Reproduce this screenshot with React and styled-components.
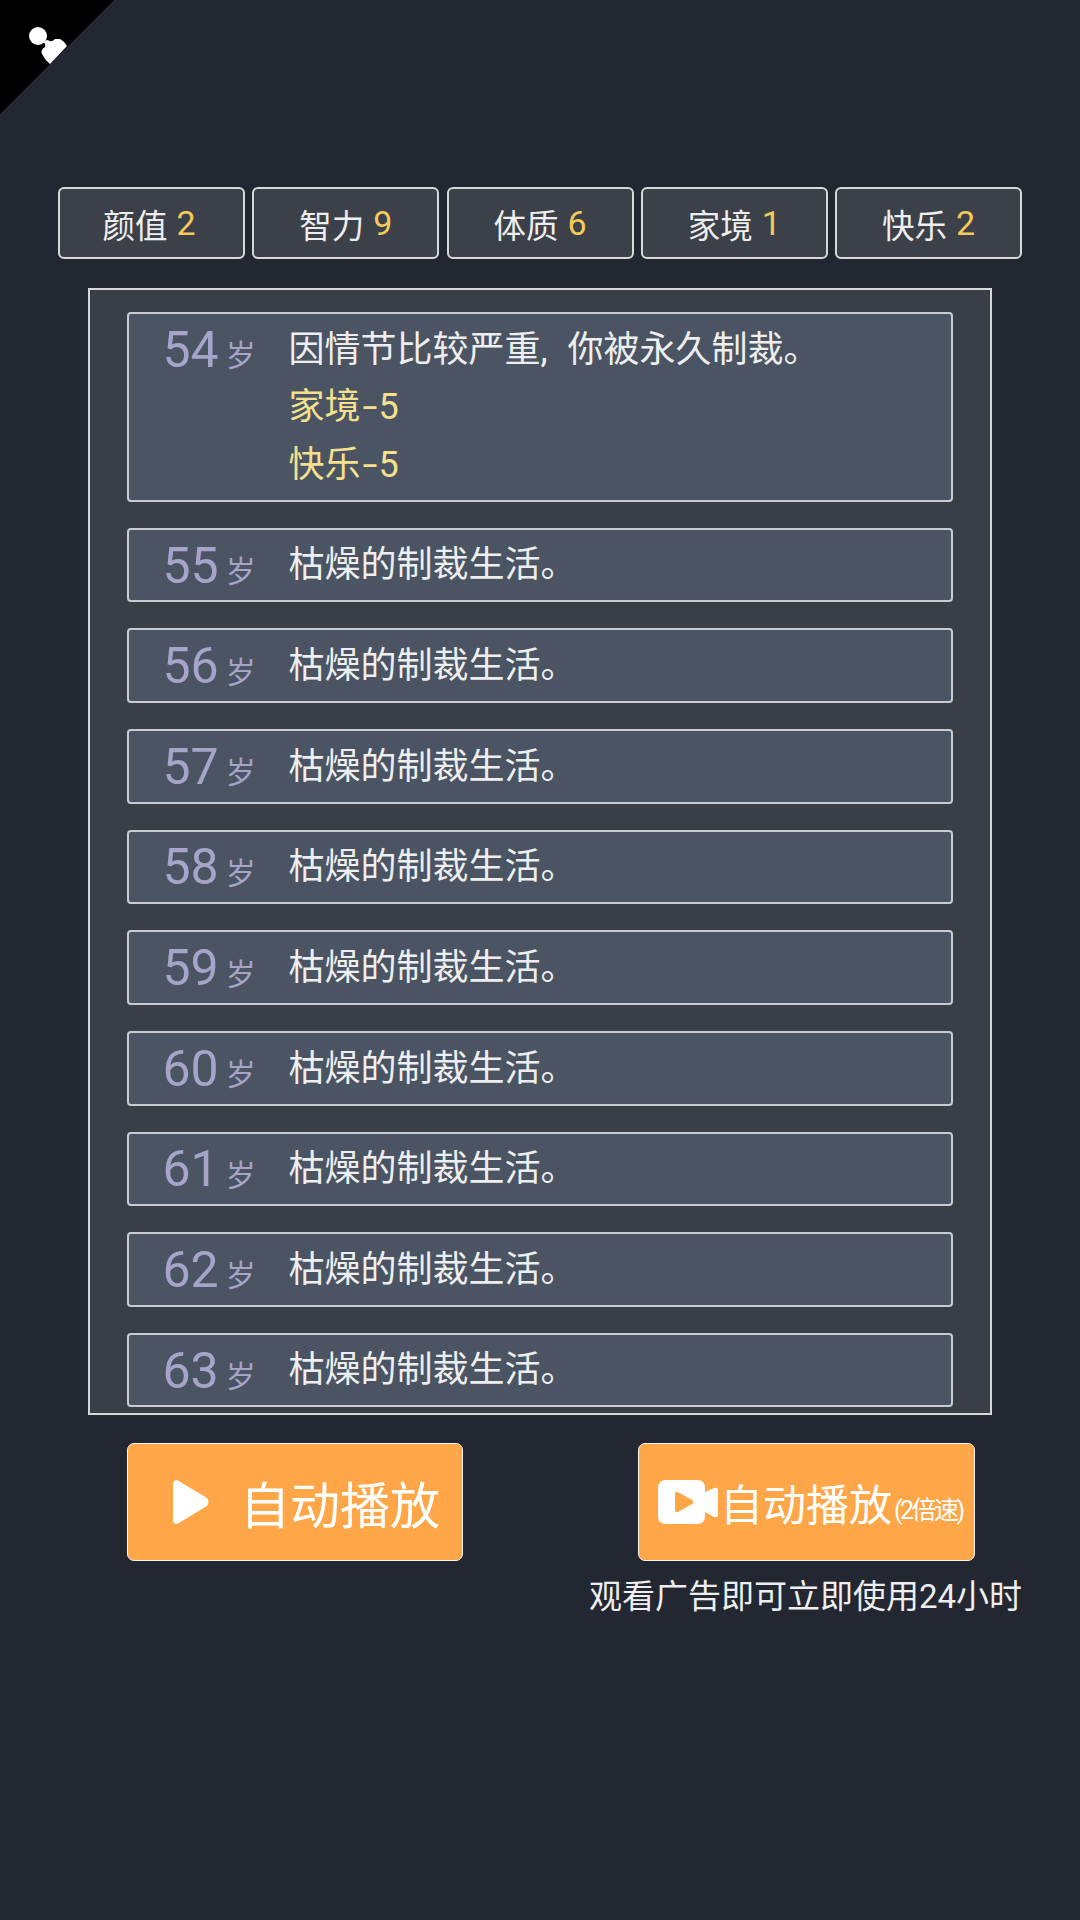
import styled, { createGlobalStyle } from "styled-components";

const GlobalStyle = createGlobalStyle`
html, body {
    margin: 0;
    padding: 0;
    background: #222731;
}
* {
    box-sizing: border-box;
}
`;

const Page = styled.div`
position: relative;
width: 1080px;
height: 1920px;
padding: 187px 58px 0;
overflow: hidden;
background: #222731;
font-family: Roboto, "Noto Sans CJK SC", sans-serif;
color: #eeeeee;
`;

const Corner = styled.div`
position: absolute;
top: 0;
left: 0;
width: 114px;
height: 114px;
background: #000;
clip-path: polygon(0 0, 100% 0, 0 100%);
`;

const PawnIcon = styled.svg`
position: absolute;
top: 0;
left: 0;
`;

const StatBar = styled.div`
display: grid;
grid-template-columns: repeat(5, 187px);
column-gap: 7.25px;
`;

const Stat = styled.div`
display: flex;
align-items: center;
justify-content: center;
height: 72px;
border: 2px solid #d8d8d8;
border-radius: 6px;
background: #3c4048;
font-size: 32.5px;
&:first-child {
    padding-right: 5px;
}
`;

const StatValue = styled.span`
margin-left: 9px;
color: #f4ca5c;
font-size: 34px;
`;

const Panel = styled.div`
height: 1127px;
margin: 29px 30px 0;
padding: 22px 37px 0;
overflow: hidden;
border: 2px solid #d8d8d8;
background: #3a3e47;
`;

const EventList = styled.div`
display: flex;
flex-direction: column;
gap: 26px;
`;

const EventRow = styled.div`
display: flex;
padding: 6px 0 5.45px 33.5px;
border: 2px solid #c8ccd2;
border-radius: 4px;
background: #4a5462;
`;

const Age = styled.div`
display: flex;
flex: 0 0 126px;
height: 57.6px;
margin-top: 1px;
align-items: center;
color: #a6a4c8;
font-size: 50px;
`;

const AgeUnit = styled.span`
margin: 7px 0 0 7px;
font-size: 30px;
`;

const EventBody = styled.div`
padding-top: 1.6px;
font-size: 36px;
line-height: 57.6px;
white-space: nowrap;
`;

const LeadLine = styled.div`
word-spacing: 11px;
`;

const Effect = styled.div`
color: #f5e08e;
`;

// the hyphen in the reference is a good deal wider than Roboto's
const Minus = styled.span`
display: inline-block;
width: 18px;
text-align: center;
transform: scaleX(1.5);
`;

const ActionRow = styled.div`
display: flex;
justify-content: space-between;
margin: 28px 47px 0 69px;
`;

const ActionButton = styled.div`
display: flex;
align-items: center;
width: ${(p) => p.$width}px;
height: 118px;
padding-left: ${(p) => p.$inset}px;
border: 1.5px solid #f5f5f5;
border-radius: 7px;
background: #ffa648;
color: #fff;
white-space: nowrap;
`;

const ActionLabel = styled.span`
margin-left: ${(p) => p.$gap}px;
font-size: ${(p) => p.$size}px;
`;

const SpeedNote = styled.span`
margin: 12px 0 0 2px;
font-size: 25px;
letter-spacing: -2.5px;
`;

const Caption = styled.div`
margin-top: 12px;
text-align: right;
font-size: 33px;
line-height: 48px;
`;

const events = [55, 56, 57, 58, 59, 60, 61, 62, 63];
const stats = [
    ["颜值", 2],
    ["智力", 9],
    ["体质", 6],
    ["家境", 1],
    ["快乐", 2],
];

const App = () => (
    <Page lang="zh-CN">
        <GlobalStyle />
        <Corner />
        <PawnIcon width="114" height="114" viewBox="0 0 114 114">
            <circle cx="38" cy="36" r="9" fill="#fff" />
            <path
                d="M43 41 L48 40 Q51 43 55 39 L60 39 Q64 41 67 46 L50 64 Q45 60 42 54 Q40 50 45 47 Q46 44 43 41 Z"
                fill="#fff"
            />
        </PawnIcon>

        <StatBar>
            {stats.map(([name, value]) => (
                <Stat key={name}>
                    {name}
                    <StatValue>{value}</StatValue>
                </Stat>
            ))}
        </StatBar>

        <Panel>
            <EventList>
                <EventRow>
                    <Age>
                        54<AgeUnit>岁</AgeUnit>
                    </Age>
                    <EventBody>
                        <LeadLine>因情节比较严重, 你被永久制裁。</LeadLine>
                        <Effect>家境<Minus>-</Minus>5</Effect>
                        <Effect>快乐<Minus>-</Minus>5</Effect>
                    </EventBody>
                </EventRow>
                {events.map((age) => (
                    <EventRow key={age}>
                        <Age>
                            {age}
                            <AgeUnit>岁</AgeUnit>
                        </Age>
                        <EventBody>枯燥的制裁生活。</EventBody>
                    </EventRow>
                ))}
            </EventList>
        </Panel>

        <ActionRow>
            <ActionButton $width={336} $inset={44}>
                <svg width="38" height="46" viewBox="0 0 38 46">
                    <path
                        d="M1 5 Q1 0 6 1.5 L35 19 Q38 23 35 27 L6 44.5 Q1 46 1 41 Z"
                        fill="#fff"
                    />
                </svg>
                <ActionLabel $size={50} $gap={30}>自动播放</ActionLabel>
            </ActionButton>
            <ActionButton $width={337} $inset={19}>
                <svg width="60" height="44" viewBox="0 0 60 44">
                    <path
                        fillRule="evenodd"
                        d="M8 0 H39 Q47 0 47 8 V12 L56 8 Q60 7 60 11 V34 Q60 38 56 37 L47 32 V36 Q47 44 39 44 H8 Q0 44 0 36 V8 Q0 0 8 0 Z M20 12 Q17 11 17 14 V30 Q17 33 20 32 L34 24 Q37 22 34 20 Z"
                        fill="#fff"
                    />
                </svg>
                <ActionLabel $size={43} $gap={2}>自动播放</ActionLabel>
                <SpeedNote>(2倍速)</SpeedNote>
            </ActionButton>
        </ActionRow>

        <Caption>观看广告即可立即使用24小时</Caption>
    </Page>
);

export default App;
